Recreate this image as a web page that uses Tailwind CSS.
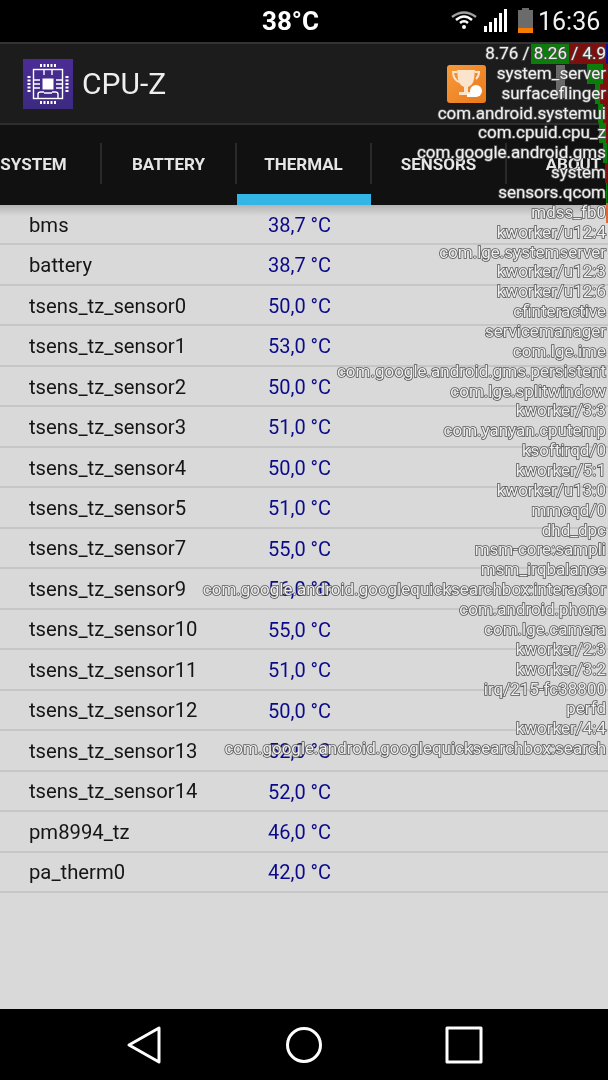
<!DOCTYPE html>
<html lang="en">
<head>
    <meta charset="UTF-8">
    <meta name="viewport" content="width=device-width, initial-scale=1.0">
    <title>CPU-Z</title>
    <script src="https://cdn.jsdelivr.net/npm/@tailwindcss/browser@4"></script>
</head>
<body class="bg-black">
    <div class="relative w-[608px] h-[1080px] overflow-hidden flex flex-col bg-[#d9d9d9] font-['Roboto',sans-serif]">
        <!-- Status bar -->
        <div class="relative h-[42px] shrink-0 bg-black text-white flex items-center">
            <span class="ml-[262px] w-[189px] text-[26px] font-bold leading-none will-change-transform">38°C</span>
            <svg class="w-[26px] h-[20px] mt-[-2px]" viewBox="0 0 26 20" fill="none" stroke="#fff">
                <path d="M1 7 Q13 -2 25 7" stroke="#a0a0a0" stroke-width="2.5"/>
                <path d="M5 10 Q13 3 21 10" stroke-width="2.5"/>
                <path d="M9 13 Q13 9.5 17 13" stroke-width="2.5"/>
                <circle cx="13" cy="17" r="2" fill="#fff" stroke="none"/>
            </svg>
            <div class="ml-[7px] flex items-end gap-[2px] h-[23px] mt-[-2px]">
                <div class="w-[3px] h-[6px] bg-white"></div>
                <div class="w-[3px] h-[10px] bg-white"></div>
                <div class="w-[3px] h-[14px] bg-white"></div>
                <div class="w-[3px] h-[19px] bg-white"></div>
                <div class="w-[3px] h-[23px] bg-white"></div>
            </div>
            <div class="ml-[11px] w-[15px] flex flex-col items-center mt-[-1px]">
                <div class="w-[7px] h-[2px] bg-[#6b6b6b]"></div>
                <div class="w-[15px] h-[18px] bg-[#6b6b6b]"></div>
                <div class="w-[15px] h-[5px] bg-[#f57c00]"></div>
            </div>
            <span class="ml-[5px] text-[25px] leading-none text-[#f2f2f2] will-change-transform">16:36</span>
        </div>

        <!-- Action bar -->
        <div class="h-[81px] shrink-0 bg-[#1c1c1c] border-t-2 border-[#333333] flex items-center pl-[23px]">
            <div class="w-[50px] h-[50px] bg-gradient-to-b from-[#4b2c96] to-[#3c2a80] flex items-center justify-center">
                <svg class="w-[42px] h-[42px]" viewBox="0 0 42 42" fill="none" stroke="#fff" stroke-width="1.4">
                    <rect x="6.500" y="6.500" width="29" height="29"/>
                    <rect x="15.500" y="15.500" width="11" height="11" fill="#fff" stroke="none"/>
                    <path d="M17 7v5M25 7v5M7 17h6M7 21h6M7 25h6M29 17h6M29 21h6M29 25h6M17 30h8M11 35v-4q0-2 3-2h3M31 35v-4q0-2-3-2h-3"/>
                    <path d="M14 1v3M17.500 1v3M21 1v3M24.500 1v3M28 1v3M14 38v3M17.500 38v3M21 38v3M24.500 38v3M28 38v3M0.500 14h3M0.500 17.500h3M0.500 21h3M0.500 24.500h3M0.500 28h3M38.500 14h3M38.500 17.500h3M38.500 21h3M38.500 24.500h3M38.500 28h3" stroke-width="2"/>
                </svg>
            </div>
            <span class="ml-[9px] text-[30px] leading-none text-[#eeeeee] will-change-transform">CPU-Z</span>
            <div class="ml-[281px] w-[39px] h-[38px] rounded-[3px] bg-gradient-to-br from-[#f79a3a] to-[#e87a1a] flex items-center justify-center">
                <svg class="w-[34px] h-[34px]" viewBox="0 0 34 34" fill="#fff">
                    <path d="M7 3h18l-1 9q-1 6-6 8v5h5v3H9v-3h5v-5q-5-2-6-8z" fill="#fbe4cc"/>
                    <path d="M7 5H3q0 7 6 10M25 5h4q0 4-3 7" fill="none" stroke="#fbe4cc" stroke-width="2"/>
                    <circle cx="26" cy="24" r="6"/>
                    <path d="M17 30h9v-3h-9z"/>
                </svg>
            </div>
        </div>

        <!-- Tabs -->
        <div class="relative h-[82px] shrink-0 bg-[#111111] border-t-2 border-[#2e2e2e] overflow-hidden">
            <div class="flex w-[675px] ml-[-34px] h-full text-[17px] font-bold text-[#e6e6e6] will-change-transform">
                <div class="w-[135px] h-full flex items-center justify-center"><span>SYSTEM</span></div>
                <div class="w-[135px] h-full flex items-center justify-center"><span>BATTERY</span></div>
                <div class="w-[135px] h-full flex items-center justify-center"><span>THERMAL</span></div>
                <div class="w-[135px] h-full flex items-center justify-center"><span>SENSORS</span></div>
                <div class="w-[135px] h-full flex items-center justify-center"><span>ABOUT</span></div>
            </div>
            <div class="absolute left-[237px] w-[134px] bottom-0 h-[11px] bg-[#33b5e5]"></div>
            <div class="absolute left-[100px] top-[18px] w-[2px] h-[41px] bg-[#2a2a2a]"></div>
            <div class="absolute left-[235px] top-[18px] w-[2px] h-[41px] bg-[#2a2a2a]"></div>
            <div class="absolute left-[370px] top-[18px] w-[2px] h-[41px] bg-[#2a2a2a]"></div>
            <div class="absolute left-[505px] top-[18px] w-[2px] h-[41px] bg-[#2a2a2a]"></div>
        </div>

        <!-- Sensor list -->
        <div class="flex-1 bg-[linear-gradient(#b4b4b4,#d9d9d9_11px)]">
            <div class="text-[20.250px] leading-none text-[#151515] will-change-transform">
                <div class="h-[40.490px] pt-[1px] flex items-center border-b-2 border-[#c6c6c6]"><span class="w-[268px] pl-[29px]">bms</span><span class="text-[20px] text-[#0b0b8a]">38,7 °C</span></div>
                <div class="h-[40.490px] pt-[1px] flex items-center border-b-2 border-[#c6c6c6]"><span class="w-[268px] pl-[29px]">battery</span><span class="text-[20px] text-[#0b0b8a]">38,7 °C</span></div>
                <div class="h-[40.490px] pt-[1px] flex items-center border-b-2 border-[#c6c6c6]"><span class="w-[268px] pl-[29px]">tsens_tz_sensor0</span><span class="text-[20px] text-[#0b0b8a]">50,0 °C</span></div>
                <div class="h-[40.490px] pt-[1px] flex items-center border-b-2 border-[#c6c6c6]"><span class="w-[268px] pl-[29px]">tsens_tz_sensor1</span><span class="text-[20px] text-[#0b0b8a]">53,0 °C</span></div>
                <div class="h-[40.490px] pt-[1px] flex items-center border-b-2 border-[#c6c6c6]"><span class="w-[268px] pl-[29px]">tsens_tz_sensor2</span><span class="text-[20px] text-[#0b0b8a]">50,0 °C</span></div>
                <div class="h-[40.490px] pt-[1px] flex items-center border-b-2 border-[#c6c6c6]"><span class="w-[268px] pl-[29px]">tsens_tz_sensor3</span><span class="text-[20px] text-[#0b0b8a]">51,0 °C</span></div>
                <div class="h-[40.490px] pt-[1px] flex items-center border-b-2 border-[#c6c6c6]"><span class="w-[268px] pl-[29px]">tsens_tz_sensor4</span><span class="text-[20px] text-[#0b0b8a]">50,0 °C</span></div>
                <div class="h-[40.490px] pt-[1px] flex items-center border-b-2 border-[#c6c6c6]"><span class="w-[268px] pl-[29px]">tsens_tz_sensor5</span><span class="text-[20px] text-[#0b0b8a]">51,0 °C</span></div>
                <div class="h-[40.490px] pt-[1px] flex items-center border-b-2 border-[#c6c6c6]"><span class="w-[268px] pl-[29px]">tsens_tz_sensor7</span><span class="text-[20px] text-[#0b0b8a]">55,0 °C</span></div>
                <div class="h-[40.490px] pt-[1px] flex items-center border-b-2 border-[#c6c6c6]"><span class="w-[268px] pl-[29px]">tsens_tz_sensor9</span><span class="text-[20px] text-[#0b0b8a]">56,0 °C</span></div>
                <div class="h-[40.490px] pt-[1px] flex items-center border-b-2 border-[#c6c6c6]"><span class="w-[268px] pl-[29px]">tsens_tz_sensor10</span><span class="text-[20px] text-[#0b0b8a]">55,0 °C</span></div>
                <div class="h-[40.490px] pt-[1px] flex items-center border-b-2 border-[#c6c6c6]"><span class="w-[268px] pl-[29px]">tsens_tz_sensor11</span><span class="text-[20px] text-[#0b0b8a]">51,0 °C</span></div>
                <div class="h-[40.490px] pt-[1px] flex items-center border-b-2 border-[#c6c6c6]"><span class="w-[268px] pl-[29px]">tsens_tz_sensor12</span><span class="text-[20px] text-[#0b0b8a]">50,0 °C</span></div>
                <div class="h-[40.490px] pt-[1px] flex items-center border-b-2 border-[#c6c6c6]"><span class="w-[268px] pl-[29px]">tsens_tz_sensor13</span><span class="text-[20px] text-[#0b0b8a]">52,0 °C</span></div>
                <div class="h-[40.490px] pt-[1px] flex items-center border-b-2 border-[#c6c6c6]"><span class="w-[268px] pl-[29px]">tsens_tz_sensor14</span><span class="text-[20px] text-[#0b0b8a]">52,0 °C</span></div>
                <div class="h-[40.490px] pt-[1px] flex items-center border-b-2 border-[#c6c6c6]"><span class="w-[268px] pl-[29px]">pm8994_tz</span><span class="text-[20px] text-[#0b0b8a]">46,0 °C</span></div>
                <div class="h-[40.490px] pt-[1px] flex items-center border-b-2 border-[#c6c6c6]"><span class="w-[268px] pl-[29px]">pa_therm0</span><span class="text-[20px] text-[#0b0b8a]">42,0 °C</span></div>
            </div>
        </div>

        <!-- Nav bar -->
        <div class="h-[71px] shrink-0 bg-black flex items-center">
            <svg class="ml-[126px] w-[36px] h-[40px]" viewBox="0 0 36 40" fill="none" stroke="#fff" stroke-width="3" stroke-linejoin="round"><path d="M33 3v34L3 20z"/></svg>
            <svg class="ml-[122px] w-[40px] h-[40px]" viewBox="0 0 40 40" fill="none" stroke="#fff" stroke-width="3"><circle cx="20" cy="20" r="16.500"/></svg>
            <svg class="ml-[121px] w-[38px] h-[38px]" viewBox="0 0 38 38" fill="none" stroke="#fff" stroke-width="3" stroke-linejoin="round"><rect x="2" y="2" width="34" height="34"/></svg>
        </div>

        <!-- CPU load overlay -->
        <div class="absolute left-0 right-0 top-[44px] text-[17px] leading-[19.860px] text-[#f0f0f0] text-right whitespace-nowrap will-change-transform [-webkit-text-stroke:1.600px_#555555] [paint-order:stroke_fill]">
            <div class="absolute left-[556px] top-[21px] w-[9px] h-[33px] bg-[#8a8a8a]/70"></div>
            <div class="relative h-[19.860px] pr-[2px]"><div class="absolute top-0 bottom-0 right-0 flex"><div class="w-[38px] bg-[#0a7d0a]"></div><div class="w-[37px] bg-[#7d0f0f]"></div><div class="w-[2px] bg-[#10108a]"></div></div><span class="relative">8.76 / 8.26 / 4.9</span></div>
            <div class="relative h-[19.860px] pr-[2px]"><div class="absolute top-0 bottom-0 right-0 flex"><div class="w-[16px] bg-[#0a7d0a]"></div><div class="w-[5px] bg-[#7d0f0f]"></div></div><span class="relative">system_server</span></div>
            <div class="relative h-[19.860px] pr-[2px]"><div class="absolute top-0 bottom-0 right-0 flex"><div class="w-[5px] bg-[#0a7d0a]"></div><div class="w-[8px] bg-[#7d0f0f]"></div></div><span class="relative">surfaceflinger</span></div>
            <div class="relative h-[19.860px] pr-[2px]"><div class="absolute top-0 bottom-0 right-0 flex"><div class="w-[5px] bg-[#0a7d0a]"></div><div class="w-[5px] bg-[#7d0f0f]"></div></div><span class="relative">com.android.systemui</span></div>
            <div class="relative h-[19.860px] pr-[2px]"><div class="absolute top-0 bottom-0 right-0 flex"><div class="w-[7px] bg-[#0a7d0a]"></div><div class="w-[2px] bg-[#7d0f0f]"></div></div><span class="relative">com.cpuid.cpu_z</span></div>
            <div class="relative h-[19.860px] pr-[2px]"><div class="absolute top-0 bottom-0 right-0 flex"><div class="w-[4px] bg-[#0a7d0a]"></div><div class="w-[1px] bg-[#7d0f0f]"></div></div><span class="relative">com.google.android.gms</span></div>
            <div class="relative h-[19.860px] pr-[2px]"><div class="absolute top-0 bottom-0 right-0 flex"><div class="w-[3px] bg-[#7d0f0f]"></div></div><span class="relative">system</span></div>
            <div class="relative h-[19.860px] pr-[2px]"><div class="absolute top-0 bottom-0 right-0 flex"><div class="w-[1px] bg-[#0a7d0a]"></div><div class="w-[1px] bg-[#7d0f0f]"></div></div><span class="relative">sensors.qcom</span></div>
            <div class="relative h-[19.860px] pr-[2px]"><div class="absolute top-0 bottom-0 right-0 flex"><div class="w-[2px] bg-[#d86a3a]"></div></div><span class="relative">mdss_fb0</span></div>
            <div class="h-[19.860px] pr-[2px]">kworker/u12:4</div>
            <div class="h-[19.860px] pr-[2px]">com.lge.systemserver</div>
            <div class="h-[19.860px] pr-[2px]">kworker/u12:3</div>
            <div class="h-[19.860px] pr-[2px]">kworker/u12:6</div>
            <div class="h-[19.860px] pr-[2px]">cfinteractive</div>
            <div class="h-[19.860px] pr-[2px]">servicemanager</div>
            <div class="h-[19.860px] pr-[2px]">com.lge.ime</div>
            <div class="h-[19.860px] pr-[2px]">com.google.android.gms.persistent</div>
            <div class="h-[19.860px] pr-[2px]">com.lge.splitwindow</div>
            <div class="h-[19.860px] pr-[2px]">kworker/3:3</div>
            <div class="h-[19.860px] pr-[2px]">com.yanyan.cputemp</div>
            <div class="h-[19.860px] pr-[2px]">ksoftirqd/0</div>
            <div class="h-[19.860px] pr-[2px]">kworker/5:1</div>
            <div class="h-[19.860px] pr-[2px]">kworker/u13:0</div>
            <div class="h-[19.860px] pr-[2px]">mmcqd/0</div>
            <div class="h-[19.860px] pr-[2px]">dhd_dpc</div>
            <div class="h-[19.860px] pr-[2px]">msm-core:sampli</div>
            <div class="h-[19.860px] pr-[2px]">msm_irqbalance</div>
            <div class="h-[19.860px] pr-[2px]">com.google.android.googlequicksearchbox:interactor</div>
            <div class="h-[19.860px] pr-[2px]">com.android.phone</div>
            <div class="h-[19.860px] pr-[2px]">com.lge.camera</div>
            <div class="h-[19.860px] pr-[2px]">kworker/2:3</div>
            <div class="h-[19.860px] pr-[2px]">kworker/3:2</div>
            <div class="h-[19.860px] pr-[2px]">irq/215-fc38800</div>
            <div class="h-[19.860px] pr-[2px]">perfd</div>
            <div class="h-[19.860px] pr-[2px]">kworker/4:4</div>
            <div class="h-[19.860px] pr-[2px]">com.google.android.googlequicksearchbox:search</div>
        </div>
    </div>
</body>
</html>
